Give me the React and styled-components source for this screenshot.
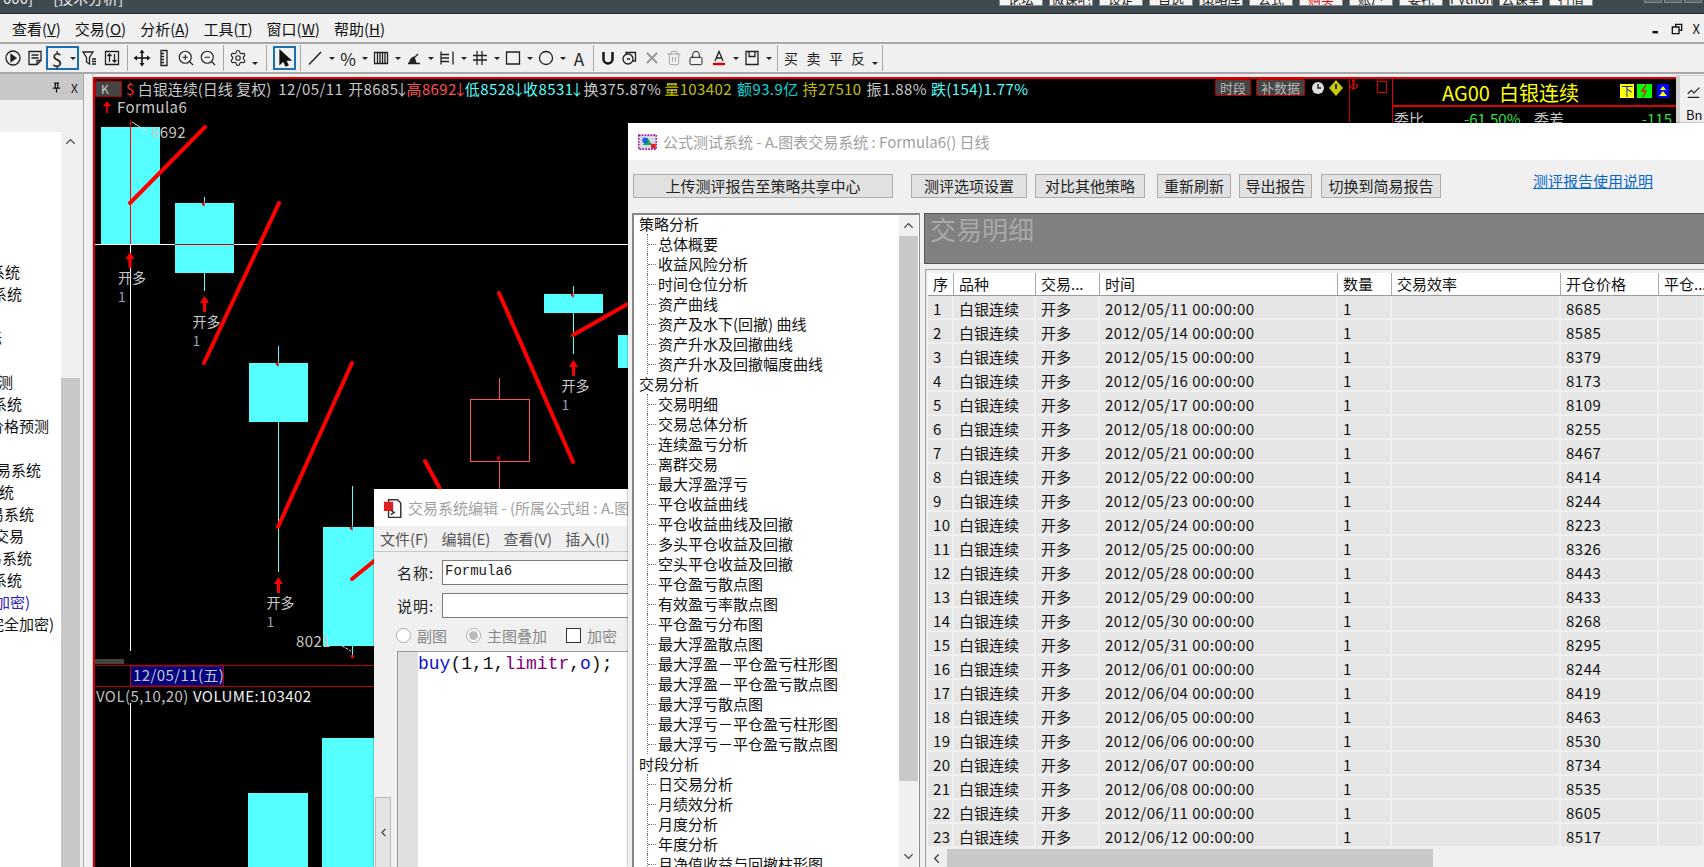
import React from 'react';
import styled, { createGlobalStyle } from 'styled-components';
import { ZoomIn, ZoomOut, Settings, Trash2, Lock, Anchor, ChevronUp, ChevronDown, ChevronLeft } from 'lucide-react';

const UI = '"Noto Sans CJK SC", "Noto Sans", sans-serif';

const Global = createGlobalStyle`
  html, body { margin: 0; padding: 0; background: #f0f0f0; overflow: hidden; }
  * { box-sizing: border-box; }
`;

const Desk = styled.div`
  position: relative;
  width: 1704px;
  height: 867px;
  overflow: hidden;
  display: flex;
  flex-direction: column;
  font-family: ${UI};
  font-size: 15px;
  color: #111;
`;

/* top window title */
const TitleBar = styled.div`
  height: 14px;
  flex: none;
  background: #3e4a50;
  border-bottom: 1px solid #20282c;
  display: flex;
  overflow: hidden;
  position: relative;
`;
const TitleText = styled.div`
  color: #e8e8e8;
  font-size: 15px;
  line-height: 14px;
  margin: -9px 0 0 3px;
  white-space: pre;
`;
const TopButtons = styled.div`
  margin-left: auto;
  margin-right: 111px;
  display: flex;
  gap: 6px;
  height: 6px;
`;
const TopButton = styled.div`
  width: 44px;
  height: 6px;
  background: #f4f4f4;
  border: 1px solid #888;
  border-top: 0;
  color: ${p => (p.$red ? '#e01010' : '#222')};
  font-size: 13px;
  line-height: 10px;
  text-align: center;
  overflow: hidden;
  div { margin-top: -6px; }
`;
const TopControl = styled.div`
  position: absolute;
  top: 0;
  left: ${p => p.$x}px;
  width: 18px;
  height: 3px;
  background: #59646a;
  border: 1px solid #808a90;
  border-top: 0;
`;

/* menu */
const MenuBar = styled.div`
  height: 29px;
  flex: none;
  margin-top: 1px;
  background: #f0f0f0;
  border-bottom: 2px solid #a8a8a8;
  display: flex;
  align-items: center;
  padding-left: 12px;
  gap: 14px;
  line-height: 28px;
`;
const MenuItem = styled.div`
  white-space: nowrap;
  u { text-underline-offset: 1px; }
`;
const WinControls = styled.div`
  margin-left: auto;
  display: flex;
  align-items: center;
  gap: 10px;
  padding-right: 4px;
  font-size: 13px;
  color: #111;
`;

/* toolbar */
const ToolBar = styled.div`
  height: 30px;
  flex: none;
  background: #f0f0f0;
  display: flex;
  align-items: center;
  padding-left: 2px;
  border-bottom: 2px solid #a8a8a8;
`;
const ToolGroup = styled.div`
  display: flex;
  align-items: center;
  height: 28px;
`;
const Tool = styled.div`
  width: ${p => p.$w || 22}px;
  height: 24px;
  flex: none;
  display: flex;
  align-items: center;
  justify-content: center;
  color: ${p => p.$color || '#222'};
  font-size: ${p => p.$size || 14}px;
  line-height: 1;
  border: ${p => (p.$active ? '2px solid #1a6fb0' : '0')};
`;
const DollarGlyph = styled.span`
  width: 20px;
  flex: none;
  text-align: center;
`;
const Caret = styled.div`
  width: 11px;
  flex: none;
  display: flex;
  justify-content: center;
  margin-top: ${p => (p.$low ? 11 : 0)}px;
  &::after {
    content: '';
    border-left: 3px solid transparent;
    border-right: 3px solid transparent;
    border-top: 3px solid #222;
  }
`;
const Sep = styled.div`
  width: ${p => p.$w || 8}px;
  height: 26px;
  flex: none;
  display: flex;
  justify-content: center;
  &::after { content: ''; width: 1px; height: 100%; background: #a8a8a8; }
`;

/* main row */
const Main = styled.div`
  flex: 1;
  min-height: 0;
  display: flex;
  background: #f0f0f0;
`;
const Dock = styled.div`
  width: 84px;
  flex: none;
  display: flex;
  flex-direction: column;
  border-right: 1px solid #a8a8a8;
`;
const DockHead = styled.div`
  height: 26px;
  flex: none;
  background: #c8c8c8;
  display: flex;
  justify-content: flex-end;
  align-items: center;
  gap: 9px;
  padding-right: 5px;
  font-size: 12px;
`;
const DockBody = styled.div`
  flex: 1;
  display: flex;
  padding-top: 32px;
  min-height: 0;
`;
const DockTree = styled.div`
  width: 61px;
  background: #fff;
  overflow: hidden;
  padding-top: 129px;
`;
const DockRow = styled.div`
  height: 22px;
  display: flex;
  justify-content: flex-end;
  line-height: 22px;
  white-space: nowrap;
  padding-right: ${p => p.$pad || 0}px;
  color: ${p => p.$color || '#111'};
`;
const DockScroll = styled.div`
  width: 19px;
  display: flex;
  flex-direction: column;
  align-items: center;
  margin-top: -32px;
  padding-top: 34px;
`;
const ScrollThumb = styled.div`
  width: 19px;
  flex: 1;
  margin-top: ${p => p.$top}px;
  background: #c8c8c8;
`;
const Gutter = styled.div`
  width: 9px;
  flex: none;
  border-right: 1px solid #c4c4c4;
`;

const ChartPane = styled.div`
  flex: 1;
  margin-top: 3px;
  border-top: 2px solid #e00000;
  border-left: 2px solid #d00000;
  background: #000;
  display: flex;
  min-width: 0;
`;
const ChartMain = styled.div`
  position: relative;
  flex: 1;
  min-width: 0;
  color: #c8c8c8;
`;
const ChartSvg = styled.svg`
  position: absolute;
  inset: 0;
  display: block;
`;
const InfoBar = styled.div`
  position: relative;
  z-index: 1;
  height: 20px;
  display: flex;
  align-items: center;
  white-space: pre;
  font-size: 15px;
  line-height: 20px;
  letter-spacing: 0.4px;
`;
const KBox = styled.div`
  width: 27px;
  height: 16px;
  background: #444;
  border: 1px solid #b00000;
  color: #ccc;
  font-size: 12px;
  line-height: 14px;
  padding-left: 5px;
  margin-right: 4px;
`;
const Seg = styled.span`
  color: ${p => p.$c || '#c8c8c8'};
  margin-left: ${p => p.$ml || 0}px;
  letter-spacing: ${p => (p.$tight ? 0 : 'inherit')};
`;
const Drop = styled.span`
  display: inline-block;
  width: 8px;
  overflow: visible;
  text-indent: -4px;
`;
const InfoRight = styled.div`
  position: absolute;
  left: ${p => p.$x}px;
  top: 0;
  display: flex;
  align-items: center;
  gap: 5px;
`;
const RedTag = styled.div`
  height: 17px;
  width: ${p => p.$w}px;
  background: #444;
  border: 1px solid #b00000;
  border-radius: 2px;
  color: #b8b8b8;
  font-size: 13px;
  letter-spacing: 0;
  line-height: 15px;
  text-align: center;
`;
const Formula = styled.div`
  position: relative;
  z-index: 1;
  display: flex;
  align-items: center;
  gap: 4px;
  margin-top: -1px;
  padding-left: 6px;
  color: #c8c8c8;
  font-size: 15px;
  letter-spacing: 0.4px;
  line-height: 18px;
`;
const Quote = styled.div`
  width: 284px;
  flex: none;
  border-left: 1px solid #e00000;
`;
const QuoteHead = styled.div`
  height: 28px;
  border-bottom: 2px solid #e00000;
  display: flex;
  align-items: center;
  padding-left: 49px;
  position: relative;
  color: #ff0;
  font-size: 20px;
  white-space: pre;
`;
const Badge = styled.div`
  position: absolute;
  top: 5px;
  left: ${p => p.$x}px;
  width: ${p => p.$w}px;
  height: 14px;
  background: ${p => p.$bg};
  color: ${p => p.$c};
  font-size: 12px;
  line-height: 14px;
  text-align: center;
  svg { display: block; }
`;
const QuoteRow = styled.div`
  display: grid;
  grid-template-columns: 70px 70px 107px 1fr;
  font-size: 15px;
  line-height: 24px;
  padding-left: 1px;
  color: #c8c8c8;
`;
const Green = styled.span`
  color: #30e040;
  text-align: ${p => p.$r ? 'right' : 'left'};
  padding-right: ${p => p.$r ? 4 : 0}px;
`;
const RightBar = styled.div`
  width: 28px;
  flex: none;
  border-left: 4px solid #d0d0d0;
  border-top: 1px solid #d0d0d0;
  margin-top: 1px;
  padding: 8px 0 0 6px;
  display: flex;
  flex-direction: column;
  gap: 8px;
  font-size: 13px;
  line-height: 13px;
`;

/* floating windows */
const Win = styled.div`
  position: absolute;
  left: ${p => p.$x}px;
  top: ${p => p.$y}px;
  right: ${p => p.$right}px;
  width: ${p => p.$w ? p.$w + 'px' : 'auto'};
  bottom: 0;
  background: #f0f0f0;
  display: flex;
  flex-direction: column;
  overflow: hidden;
  z-index: ${p => p.$z};
  box-shadow: 0 0 2px rgba(0,0,0,.5);
`;
const WinTitle = styled.div`
  height: ${p => p.$h}px;
  flex: none;
  background: #fff;
  display: flex;
  align-items: center;
  gap: 5px;
  padding-left: 9px;
  color: #a0a0a0;
  white-space: nowrap;
  font-size: 15px;
  svg { flex: none; }
`;
const BtnRow = styled.div`
  height: 53px;
  flex: none;
  padding: 14px 0 0 5px;
  display: flex;
  align-items: flex-start;
`;
const Btn = styled.div`
  width: ${p => p.$w}px;
  height: 24px;
  margin-left: ${p => p.$gap || 0}px;
  flex: none;
  background: #e1e1e1;
  border: 1px solid #adadad;
  text-align: center;
  line-height: 22px;
  font-size: 15px;
  color: #222;
  white-space: nowrap;
`;
const HelpLink = styled.a`
  margin: -4px 0 0 92px;
  color: #0a66cc;
  font-size: 15px;
  text-decoration: underline;
  white-space: nowrap;
`;
const TestBody = styled.div`
  flex: 1;
  min-height: 0;
  display: flex;
  padding-left: 4px;
`;
const TreeBox = styled.div`
  width: 288px;
  flex: none;
  background: #fff;
  border: 1px solid #888;
  border-bottom: 0;
  border-left-width: 2px;
  border-top-width: 2px;
  display: flex;
  overflow: hidden;
`;
const TreeList = styled.div`
  flex: 1;
  padding-left: 5px;
  margin-top: -1px;
  overflow: hidden;
`;
const TreeGroup = styled.div`
  height: 20px;
  line-height: 20px;
  font-size: 15px;
  color: #111;
`;
const TreeChild = styled.div`
  position: relative;
  height: 20px;
  margin-left: 8px;
  padding-left: 10px;
  line-height: 20px;
  font-size: 15px;
  color: #111;
  white-space: pre;
  border-left: 1px dotted #777;
  &::before {
    content: '';
    position: absolute;
    left: 0;
    top: 10px;
    width: 8px;
    border-top: 1px dotted #777;
  }
`;
const TreeScroll = styled.div`
  width: 19px;
  flex: none;
  background: #f0f0f0;
  margin-right: 1px;
  display: flex;
  flex-direction: column;
  align-items: center;
`;
const ScrollBtn = styled.div`
  height: 21px;
  display: flex;
  align-items: center;
  justify-content: center;
  flex: none;
  color: #444;
`;
const TreeThumb = styled.div`
  width: 19px;
  height: 545px;
  flex: none;
  background: #c8c8c8;
`;
const ScrollRest = styled.div`
  flex: 1;
`;
const ReportPane = styled.div`
  flex: 1;
  min-width: 0;
  margin-left: 4px;
  display: flex;
  flex-direction: column;
  position: relative;
`;
const ReportHead = styled.div`
  height: 51px;
  flex: none;
  background: #808080;
  border: 1px solid #555;
  border-right: 0;
  padding-left: 5px;
  color: #a8a8a8;
  font-size: 26px;
  line-height: 30px;
  font-family: "Noto Sans CJK SC", serif;
`;
const GridBox = styled.div`
  flex: 1;
  min-height: 0;
  margin: 5px 0 0 1px;
  border-top: 1px solid #a0a0a0;
  border-left: 1px solid #a0a0a0;
  padding: 3px 0 0 2px;
  display: flex;
  flex-direction: column;
  overflow: hidden;
`;
const cols = '26px 82px 64px 238px 54px 169px 98px 46px';
const HeadRow = styled.div`
  display: grid;
  grid-template-columns: ${cols};
  height: 23px;
  flex: none;
  background: #fff;
  border-bottom: 1px solid #999;
`;
const HeadCell = styled.div`
  padding-left: 5px;
  line-height: 22px;
  font-size: 15px;
  border-right: 1px solid #aaa;
  white-space: nowrap;
  overflow: hidden;
  color: #111;
`;
const DataRow = styled.div`
  display: grid;
  grid-template-columns: ${cols};
  height: 24px;
  flex: none;
  background: #e6e6e6;
  border-bottom: 2px solid #f0f0f0;
`;
const DataCell = styled.div`
  padding: 1px 0 0 5px;
  line-height: 23px;
  font-size: 15px;
  letter-spacing: ${p => (p.$num ? 0.5 : 0)}px;
  border-right: 2px solid #f0f0f0;
  white-space: nowrap;
  overflow: hidden;
  color: #111;
`;
const HScroll = styled.div`
  position: absolute;
  left: 2px;
  right: 0;
  bottom: 0;
  height: 18px;
  background: #f0f0f0;
  display: flex;
`;
const HBtn = styled.div`
  width: 21px;
  display: flex;
  align-items: center;
  justify-content: center;
  color: #444;
`;
const HThumb = styled.div`
  width: 486px;
  background: #c8c8c8;
`;

/* editor */
const EdMenu = styled.div`
  height: 26px;
  flex: none;
  display: flex;
  gap: 13px;
  padding-left: 6px;
  align-items: center;
  color: #555;
  white-space: nowrap;
  border-bottom: 1px solid #c8c8c8;
`;
const EdForm = styled.div`
  display: flex;
  flex-direction: column;
  padding: 8px 0 0 23px;
  gap: 8px;
  flex: none;
`;
const EdField = styled.div`
  display: flex;
  align-items: center;
  height: 25px;
  gap: 9px;
  color: #222;
`;
const EdLabel = styled.span`
  width: 36px;
  flex: none;
  white-space: nowrap;
  letter-spacing: 1px;
`;
const EdInput = styled.div`
  width: 190px;
  height: 25px;
  flex: none;
  border: 1px solid #7a7a7a;
  background: #fff;
  padding-left: 2px;
  font-family: "Liberation Mono", monospace;
  font-size: 14px;
  line-height: 21px;
  white-space: pre;
`;
const EdOpts = styled.div`
  display: flex;
  align-items: center;
  height: 18px;
  flex: none;
  margin-top: 8px;
  padding-left: 22px;
  color: #888;
  white-space: nowrap;
`;
const Radio = styled.span`
  width: 15px;
  height: 15px;
  flex: none;
  border-radius: 50%;
  border: 1px solid #aaa;
  background: #fff;
  margin: 0 6px 0 ${p => p.$ml || 0}px;
  display: inline-flex;
  align-items: center;
  justify-content: center;
  &::after {
    content: '';
    display: ${p => (p.$on ? 'block' : 'none')};
    width: 9px;
    height: 9px;
    border-radius: 50%;
    background: #bbb;
  }
`;
const Check = styled.span`
  width: 15px;
  height: 15px;
  flex: none;
  border: 1px solid #333;
  background: #fff;
  margin: 0 6px 0 19px;
`;
const EdMain = styled.div`
  flex: 1;
  min-height: 0;
  display: flex;
  margin-top: 7px;
`;
const EdSide = styled.div`
  width: 23px;
  flex: none;
  display: flex;
  flex-direction: column;
  justify-content: flex-end;
`;
const EdSideBtn = styled.div`
  width: 16px;
  height: 70px;
  margin-left: 1px;
  background: #e4e4e4;
  border: 1px solid #bbb;
  border-bottom: 0;
  display: flex;
  align-items: center;
  justify-content: center;
  color: #444;
`;
const CodeBox = styled.div`
  flex: 1;
  background: #fff;
  border: 1px solid #999;
  border-right: 0;
  border-bottom: 0;
  display: flex;
`;
const CodeGutter = styled.div`
  width: 20px;
  flex: none;
  background: #e0e0e0;
`;
const CodeLine = styled.div`
  font-family: "Liberation Mono", monospace;
  font-size: 18px;
  line-height: 24px;
  white-space: pre;
  color: #111;
`;
const Tok = styled.span`
  color: ${p => p.$c};
`;

/* data */
const menus = [['查看', 'V'], ['交易', 'O'], ['分析', 'A'], ['工具', 'T'], ['窗口', 'W'], ['帮助', 'H']];
const topBtns = ['论坛', '微课吧', '设定', '自选', '策略库', '公式', '购买', '账户', '委托', 'Python', '云课堂', '行情'];
const dockRows = [
  ['交易系统', 41], ['交易系统', 39], [''], ['标', 59], [''], ['价格预测', 48, ''], ['交易系统', 39], ['价格预测', 12], [''],
  ['交易系统', 20], ['系统', 47], ['交易系统', 27], ['交易', 37], ['交易系统', 29], ['系统', 39], ['(加密)', 31, '#3020c0'], ['(完全加密)', 7],
];
const tree = [
  ['策略分析', ['总体概要', '收益风险分析', '时间仓位分析', '资产曲线', '资产及水下(回撤) 曲线', '资产升水及回撤曲线', '资产升水及回撤幅度曲线']],
  ['交易分析', ['交易明细', '交易总体分析', '连续盈亏分析', '离群交易', '最大浮盈浮亏', '平仓收益曲线', '平仓收益曲线及回撤', '多头平仓收益及回撤', '空头平仓收益及回撤', '平仓盈亏散点图', '有效盈亏率散点图', '平仓盈亏分布图', '最大浮盈散点图', '最大浮盈－平仓盈亏柱形图', '最大浮盈－平仓盈亏散点图', '最大浮亏散点图', '最大浮亏－平仓盈亏柱形图', '最大浮亏－平仓盈亏散点图']],
  ['时段分析', ['日交易分析', '月绩效分析', '月度分析', '年度分析', '月净值收益与回撤柱形图']],
];
const trades = [
  ['05/11', 8685], ['05/14', 8585], ['05/15', 8379], ['05/16', 8173], ['05/17', 8109], ['05/18', 8255], ['05/21', 8467], ['05/22', 8414],
  ['05/23', 8244], ['05/24', 8223], ['05/25', 8326], ['05/28', 8443], ['05/29', 8433], ['05/30', 8268], ['05/31', 8295], ['06/01', 8244],
  ['06/04', 8419], ['06/05', 8463], ['06/06', 8530], ['06/07', 8734], ['06/08', 8535], ['06/11', 8605], ['06/12', 8517],
];

const Ico = ({ children, s = 18, color = '#222', w = 1.3 }) => (
  <svg width={s} height={s} viewBox="0 0 18 18" fill="none" stroke={color} strokeWidth={w}>{children}</svg>
);

const CYAN = '#55ffff';
// candle bodies and wicks, page coordinates
const bodies = [[101, 127, 59, 117], [175, 203, 59, 70], [249, 363, 59, 59], [323, 527, 59, 119], [544, 294, 59, 19], [618, 335, 59, 33], [248, 793, 60, 80], [322, 738, 60, 135]];
const wicks = [[204.5, 197, 291], [278.5, 346, 572], [352.5, 486, 657], [573.5, 286, 354]];
const trends = [[130, 203, 205, 127], [204, 363, 279, 203], [278, 527, 352, 363], [499, 293, 573, 462], [573, 335, 640, 297], [425, 461, 500, 600], [352, 579, 400, 540]];
const signals = [[130, 252], [204.5, 296], [278.5, 577], [573.5, 360]];
const ticks = [[204.5, 204], [278.5, 364], [352.5, 528], [573.5, 295], [499.5, 458]];

function Chart() {
  return (
    <ChartSvg width="1297" height="788" viewBox="95 79 1297 788" fontFamily={UI}>
      {bodies.map((b, i) => <rect key={i} x={b[0]} y={b[1]} width={b[2]} height={b[3]} fill={CYAN} />)}
      {wicks.map((w, i) => <line key={i} x1={w[0]} x2={w[0]} y1={w[1]} y2={w[2]} stroke={CYAN} />)}
      <rect x="470.5" y="399.5" width="59" height="62" fill="none" stroke="#ff5555" />
      <line x1="499.5" x2="499.5" y1="378" y2="399" stroke="#ff5555" />
      <line x1="499.5" x2="499.5" y1="461" y2="500" stroke="#ff5555" />
      <line x1="130.5" x2="130.5" y1="120" y2="244" stroke="#ff0000" />
      <line x1="95" x2="628" y1="244.5" y2="244.5" stroke="#ffffff" />
      <line x1="175" x2="234" y1="244.5" y2="244.5" stroke="#cc0000" />
      <line x1="130.5" x2="130.5" y1="245" y2="651" stroke="#ffffff" />
      <line x1="130.5" x2="130.5" y1="703" y2="867" stroke="#ffffff" />
      {trends.map((t, i) => <line key={i} x1={t[0]} y1={t[1]} x2={t[2]} y2={t[3]} stroke="#ff0000" strokeWidth="4" strokeLinecap="round" />)}
      {ticks.map((t, i) => <polygon key={i} points={`${t[0]},${t[1] - 3} ${t[0]},${t[1] + 3} ${t[0] - 3},${t[1]}`} fill="#e00000" />)}
      {signals.map((s, i) => (
        <g key={i} fill="#ff0000">
          <polygon points={`${s[0]},${s[1]} ${s[0] - 4.5},${s[1] + 7} ${s[0] + 4.5},${s[1] + 7}`} />
          <rect x={s[0] - 1.5} y={s[1] + 6} width="3" height="10" />
          <text x={s[0] - 12} y={s[1] + 31} fontSize="14" fill="#c8c8c8" stroke="none">开多</text>
          <text x={s[0] - 12} y={s[1] + 50} fontSize="14" fill="#8fa0b0" stroke="none">1</text>
        </g>
      ))}
      <text x="151" y="138" fontSize="15" letterSpacing="0.4" fill="#c8c8c8">8692</text>
      <line x1="132" y1="122" x2="148" y2="132" stroke="#ddd" />
      <text x="296" y="647" fontSize="15" letterSpacing="0.4" fill="#c8c8c8">8021</text>
      <line x1="335" y1="642" x2="351" y2="651" stroke="#ddd" strokeDasharray="3 1" />
      <rect x="351" y="655" width="3" height="3" fill="#ff0000" />
      <rect x="95" y="659" width="29" height="5" fill="#444" />
      <line x1="95" x2="374" y1="665.5" y2="665.5" stroke="#c00000" />
      <line x1="95" x2="374" y1="686.5" y2="686.5" stroke="#c00000" />
      <rect x="130.5" y="666" width="93" height="20" fill="#000080" stroke="#c00000" />
      <text x="133" y="681" fontSize="15" letterSpacing="0.4" fill="#c8c8c8">12/05/11(五)</text>
      <text x="96" y="702" fontSize="15" letterSpacing="0.4" fill="#c0c0c0">VOL(5,10,20)</text>
      <text x="193" y="702" fontSize="15" letterSpacing="0.4" fill="#f0f0f0">VOLUME:103402</text>
      <line x1="1349.5" x2="1349.5" y1="77" y2="122" stroke="#c00000" />
      <rect x="1377.5" y="81.5" width="9" height="11" fill="none" stroke="#e00000" />
      <g transform="translate(1311 81)">
        <circle cx="7" cy="7" r="6" fill="#ddd" />
        <path d="M7 3v4h3" stroke="#222" fill="none" strokeWidth="1.4" />
        <polygon points="25,-1 32,7 25,15 18,7" fill="#c8c800" />
        <rect x="24.2" y="3" width="1.6" height="5" fill="#000" />
      </g>
    </ChartSvg>
  );
}

export default function App() {
  return (
    <Desk>
      <Global />
      <TitleBar>
        <TitleText>{'000]      [技术分析]'}</TitleText>
        <TopButtons>
          {topBtns.map(t => <TopButton key={t} $red={t === '购买'}><div>{t}</div></TopButton>)}
        </TopButtons>
        <TopControl $x={1644} /><TopControl $x={1664} /><TopControl $x={1684} />
      </TitleBar>

      <MenuBar>
        {menus.map(m => <MenuItem key={m[1]}>{m[0]}(<u>{m[1]}</u>)</MenuItem>)}
        <WinControls>
          <Ico s={11} color="#111"><path d="M4 15h9" strokeWidth="4" /></Ico>
          <Ico s={12} color="#111" w={2}><path d="M7 5V2h9v9h-3M2 6h10v10H2z" /></Ico>
          <span>X</span>
        </WinControls>
      </MenuBar>

      <ToolBar>
        <ToolGroup>
          <Tool><Ico><circle cx="9" cy="9" r="7" /><path d="M7 5.5 12 9l-5 3.5z" fill="#222" /></Ico></Tool>
          <Tool><Ico><path d="M3 2.5h12v9l-4 4H3zM5.5 6h7M5.5 9h7M11 15.5v-4h4" /></Ico></Tool>
          <Tool $w={33} $active $size={19}><DollarGlyph>$</DollarGlyph><Caret /></Tool>
          <Tool><Ico><path d="M2 3h10L8.5 8.5V15l-3-2V8.5zM11 10h4M11 12.5h4M11 15h4" /></Ico></Tool>
          <Tool><Ico><path d="M2.5 2.5h13v13h-13zM6.5 13V5M4.5 7l2-2 2 2M11.5 5v8M9.5 11l2 2 2-2" /></Ico></Tool>
          <Sep />
          <Tool><Ico color="#111" w={1.6}><path d="M9 4v10M4 9h10" /><path d="M9 0.5 11.5 4h-5zM9 17.5 6.5 14h5zM0.5 9 4 6.5v5zM17.5 9 14 11.5v-5z" fill="#111" stroke="none" /></Ico></Tool>
          <Tool><Ico><path d="M6 1.5h6v15H6zM6 4.5h3M6 7.5h3M6 10.5h3M6 13.5h3" /></Ico></Tool>
          <Tool><ZoomIn size={18} strokeWidth={1.5} /></Tool>
          <Tool><ZoomOut size={18} strokeWidth={1.5} /></Tool>
          <Sep />
          <Tool><Settings size={18} strokeWidth={1.5} /></Tool>
          <Caret $low />
          <Sep $w={13} />
          <Tool $w={23} $active><Ico color="#111"><path d="M4 1.5 14.5 11H9.5l2.5 5-2.2 1-2.3-5.2L4 15z" fill="#111" /></Ico></Tool>
          <Sep />
          <Tool><Ico w={1.5}><path d="M3 15.5 15 3" /></Ico></Tool><Caret />
          <Tool $size={17}>%</Tool><Caret />
          <Tool><Ico><path d="M2.5 3.5h13v11h-13zM5.5 3.5v11M8 3.5v11M10.5 3.5v11M13 3.5v11" /></Ico></Tool><Caret />
          <Tool><Ico><path d="M3 14.5h12M4 14 13 5" /><path d="M5 14a6 6 0 0 1 4-6l2 6z" fill="#222" /></Ico></Tool><Caret />
          <Tool><Ico><path d="M3 2.5v13M15 2.5v13M3 5.5h8M3 9h8M3 12.5h8" /></Ico></Tool><Caret />
          <Tool><Ico><path d="M6 2v14M11 2v14M2 6.5h14M2 11h14" /></Ico></Tool><Caret />
          <Tool><Ico><path d="M2.5 3h13v12h-13z" /></Ico></Tool><Caret />
          <Tool><Ico><circle cx="9" cy="9" r="6.5" /></Ico></Tool><Caret />
          <Tool $size={17}>A</Tool>
          <Sep $w={7} />
          <Tool><Ico w={2.4} color="#111"><path d="M4.5 3v7a4.5 4.5 0 0 0 9 0V3" /></Ico></Tool>
          <Tool><Ico><circle cx="7" cy="10" r="5" /><path d="M5 5V3.5h9.5V12H12M6 10h3" /></Ico></Tool>
          <Tool><Ico color="#999" w={2}><path d="M4 4l10 10M14 4 4 14" /></Ico></Tool>
          <Tool $color="#999"><Trash2 size={16} strokeWidth={1.3} /></Tool>
          <Tool><Lock size={16} strokeWidth={1.5} /></Tool>
          <Tool $w={23}><Ico><path d="M5 12 9 2.5 13 12M6.5 9h5" /><path d="M3 15h12" stroke="#e00000" strokeWidth="2.4" /></Ico></Tool><Caret />
          <Tool><Ico><path d="M3 2.5h12v13H3zM6 2.5v5h6v-5" /></Ico></Tool><Caret />
          <Sep $w={6} />
          <Tool $size={14}>买</Tool>
          <Tool $size={14} $w={23}>卖</Tool>
          <Tool $size={14}>平</Tool>
          <Tool $size={14}>反</Tool>
          <Caret $low />
          <Sep $w={4} />
        </ToolGroup>
      </ToolBar>

      <Main>
        <Dock>
          <DockHead>
            <Ico s={11} color="#111" w={2}><path d="M5 2h8M7 2v8M11 2v8M3 10h12M9 10v7" /></Ico>
            <span>X</span>
          </DockHead>
          <DockBody>
            <DockTree>
              {dockRows.map((r, i) => <DockRow key={i} $pad={r[1]} $color={r[2]}>{r[0]}</DockRow>)}
            </DockTree>
            <DockScroll>
              <ChevronUp size={15} strokeWidth={2.2} color="#444" />
              <ScrollThumb $top={229} />
            </DockScroll>
          </DockBody>
        </Dock>
        <Gutter />
        <ChartPane>
          <ChartMain>
            <Chart />
            <InfoBar>
              <KBox>K</KBox>
              <Seg $c="#ff3030">$</Seg>
              <Seg $ml={3} $tight>白银连续(日线 复权)</Seg>
              <Seg $ml={7}>12/05/11</Seg>
              <Seg $ml={5}>开8685<Drop>↓</Drop></Seg>
              <Seg $c="#ff5050">高8692<Drop>↓</Drop></Seg>
              <Seg $c="#55ffff">低8528<Drop>↓</Drop></Seg>
              <Seg $c="#55ffff">收8531<Drop>↓</Drop></Seg>
              <Seg $ml={2}>换375.87%</Seg>
              <Seg $c="#c0c000" $ml={3}>量103402</Seg>
              <Seg $c="#00d8d8" $ml={5}>额93.9亿</Seg>
              <Seg $c="#c0c000" $ml={4}>持27510</Seg>
              <Seg $ml={5}>振1.88%</Seg>
              <Seg $c="#55ffff" $ml={4}>跌(154)1.77%</Seg>
              <InfoRight $x={1120}>
                <RedTag $w={36}>时段</RedTag>
                <RedTag $w={49}>补数据</RedTag>
              </InfoRight>
              <InfoRight $x={1253}><Anchor size={11} color="#ff0000" strokeWidth={2.4} /></InfoRight>
            </InfoBar>
            <Formula>
              <Ico s={12} color="#ff0000" w={2.4}><path d="M9 6v12" /><path d="M9 0 15 8H3z" fill="#ff0000" stroke="none" /></Ico>
              Formula6
            </Formula>
          </ChartMain>
          <Quote>
            <QuoteHead>
              {'AG00  白银连续'}
              <Badge $x={227} $w={14} $bg="#ffff00" $c="#1030d0">下</Badge>
              <Badge $x={244} $w={15} $bg="#00ff00" $c="#e01010">
                <svg width="15" height="14" viewBox="0 0 15 14" fill="none" stroke="#e01010" strokeWidth="1.4"><path d="M9 1 5 7h4l-3 6" /></svg>
              </Badge>
              <Badge $x={264} $w={12} $bg="#0000ff" $c="#ffff00">
                <svg width="12" height="14" viewBox="0 0 12 14" fill="#ffff00"><path d="M6 2 9 6H3zM6 7l4 5H2z" /></svg>
              </Badge>
            </QuoteHead>
            <QuoteRow>
              <span>委比</span><Green>-61.50%</Green><span>委差</span><Green $r>-115</Green>
            </QuoteRow>
          </Quote>
        </ChartPane>
        <RightBar>
          <Ico s={16}><path d="M2 15h13M2 11l4-4 3 3 6-6" /></Ico>
          <span>Bn</span>
        </RightBar>
      </Main>

      <Win $x={374} $y={489} $w={256} $z={2}>
        <WinTitle $h={37}>
          <Ico s={20} color="#333"><path d="M5 1.5h8l3 3v13H5z" fill="#fff" /><path d="M1.5 4h7v7h-7z" fill="#e02020" stroke="#e02020" /><path d="M7 11l3 2-3 2" /></Ico>
          <span>交易系统编辑 - (所属公式组 : A.图表交易系统)</span>
        </WinTitle>
        <EdMenu><span>文件(F)</span><span>编辑(E)</span><span>查看(V)</span><span>插入(I)</span></EdMenu>
        <EdForm>
          <EdField><EdLabel>名称:</EdLabel><EdInput>Formula6</EdInput></EdField>
          <EdField><EdLabel>说明:</EdLabel><EdInput /></EdField>
        </EdForm>
        <EdOpts>
          <Radio />副图
          <Radio $ml={19} $on />主图叠加
          <Check />加密
        </EdOpts>
        <EdMain>
          <EdSide><EdSideBtn><ChevronLeft size={13} /></EdSideBtn></EdSide>
          <CodeBox>
            <CodeGutter />
            <CodeLine>
              <Tok $c="#1010d0">buy</Tok>(1,1,<Tok $c="#800080">limitr</Tok>,<Tok $c="#1010d0">o</Tok>);
            </CodeLine>
          </CodeBox>
        </EdMain>
      </Win>

      <Win $x={628} $y={123} $right={0} $z={3}>
        <WinTitle $h={37}>
          <Ico s={21} color="#a020a0" w={1.4}>
            <rect x="1.5" y="3.5" width="15" height="12" fill="#d8d8e8" strokeDasharray="1.5 1" />
            <path d="M9 6l4 6H5z" fill="#10b040" stroke="none" />
            <circle cx="7" cy="8" r="2.5" fill="#2060e0" stroke="none" />
            <rect x="12" y="11" width="4" height="4" fill="#e02020" stroke="none" />
          </Ico>
          <span>公式测试系统 - A.图表交易系统 : Formula6() 日线</span>
        </WinTitle>
        <BtnRow>
          <Btn $w={260}>上传测评报告至策略共享中心</Btn>
          <Btn $w={116} $gap={18}>测评选项设置</Btn>
          <Btn $w={110} $gap={8}>对比其他策略</Btn>
          <Btn $w={74} $gap={12}>重新刷新</Btn>
          <Btn $w={73} $gap={8}>导出报告</Btn>
          <Btn $w={120} $gap={9}>切换到简易报告</Btn>
          <HelpLink>测评报告使用说明</HelpLink>
        </BtnRow>
        <TestBody>
          <TreeBox>
            <TreeList>
              {tree.map(g => (
                <React.Fragment key={g[0]}>
                  <TreeGroup>{g[0]}</TreeGroup>
                  {g[1].map(c => <TreeChild key={c}>{c}</TreeChild>)}
                </React.Fragment>
              ))}
            </TreeList>
            <TreeScroll>
              <ScrollBtn><ChevronUp size={15} strokeWidth={2.2} /></ScrollBtn>
              <TreeThumb />
              <ScrollRest />
              <ScrollBtn><ChevronDown size={15} strokeWidth={2.2} /></ScrollBtn>
            </TreeScroll>
          </TreeBox>
          <ReportPane>
            <ReportHead>交易明细</ReportHead>
            <GridBox>
              <HeadRow>
                {['序', '品种', '交易...', '时间', '数量', '交易效率', '开仓价格', '平仓...'].map(h => <HeadCell key={h}>{h}</HeadCell>)}
              </HeadRow>
              {trades.map((t, i) => (
                <DataRow key={t[0]}>
                  <DataCell $num>{i + 1}</DataCell>
                  <DataCell>白银连续</DataCell>
                  <DataCell>开多</DataCell>
                  <DataCell $num>2012/{t[0]} 00:00:00</DataCell>
                  <DataCell $num>1</DataCell>
                  <DataCell />
                  <DataCell $num>{t[1]}</DataCell>
                  <DataCell />
                </DataRow>
              ))}
            </GridBox>
            <HScroll>
              <HBtn><ChevronLeft size={15} strokeWidth={2.2} /></HBtn>
              <HThumb />
            </HScroll>
          </ReportPane>
        </TestBody>
      </Win>
    </Desk>
  );
}
